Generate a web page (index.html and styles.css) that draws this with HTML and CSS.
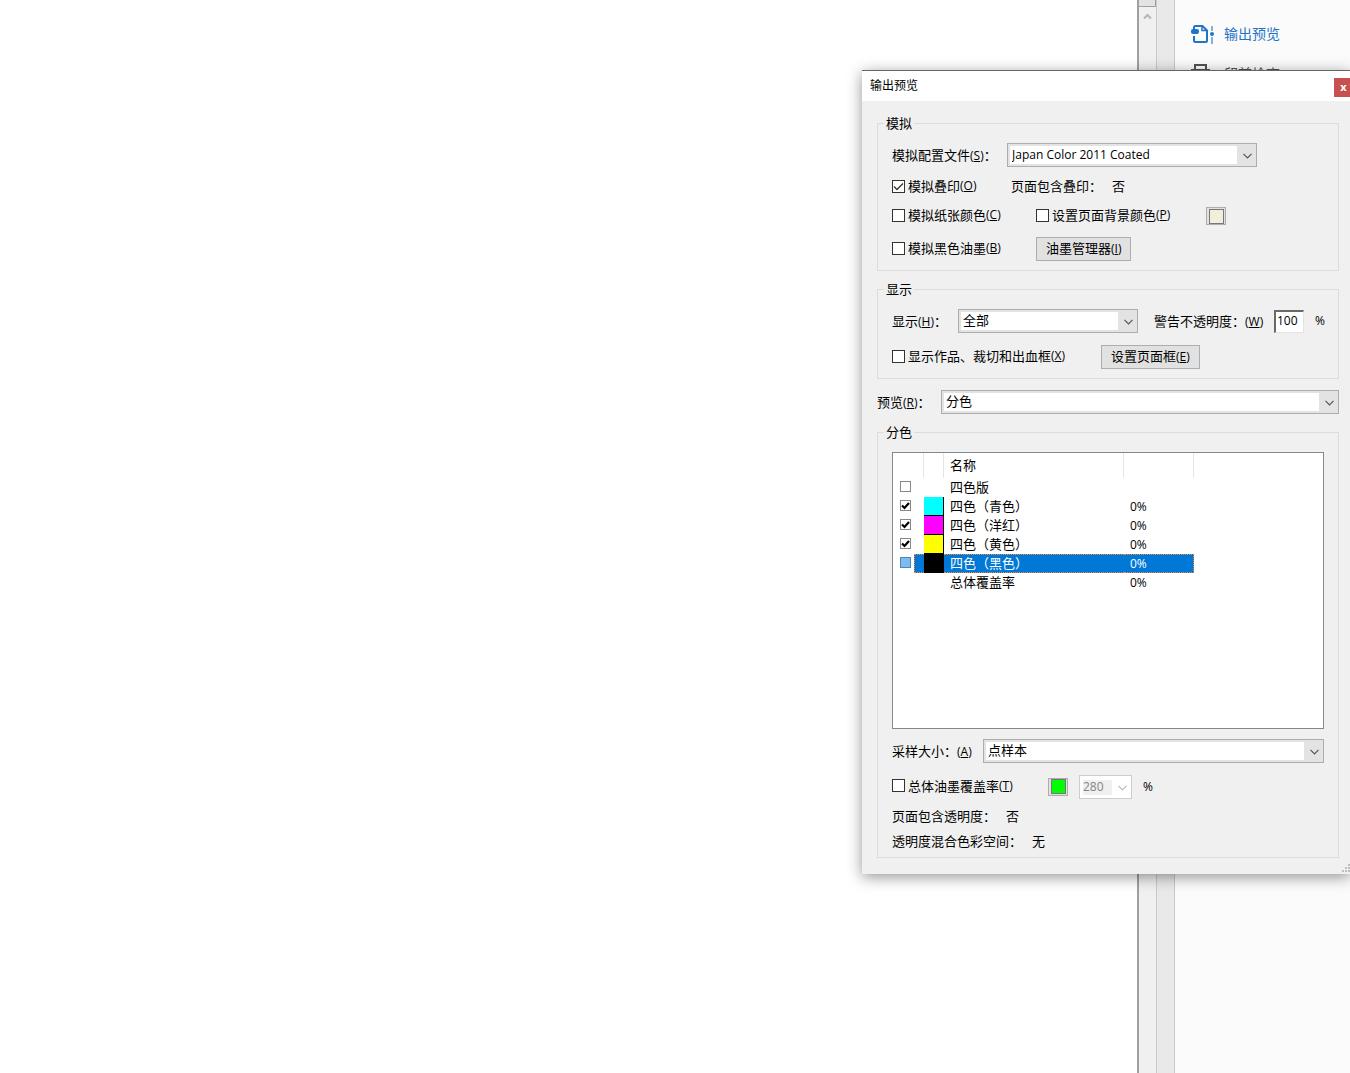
FILE: index.html
```html
<!DOCTYPE html>
<html lang="zh-CN">
<head>
<meta charset="utf-8">
<title>输出预览</title>
<link rel="stylesheet" href="styles.css">
</head>
<body>
<div class="workspace">
  <main class="document"></main>
  <div class="scrollbar">
    <div class="scroll-thumb"></div>
    <svg class="scroll-up" viewBox="0 0 9 6" width="9" height="6"><path d="M1 5.500 4.500 2 8 5.500" fill="none" stroke="#b8b8b8" stroke-width="2.200"/></svg>
  </div>
  <div class="splitter"></div>
  <nav class="tools">
    <a class="tool tool-active" href="#output">
      <svg viewBox="0 0 24 20" width="24" height="20">
        <path d="M3 5V3.500Q3 2 4.500 2H11.500L16 6.500V16.500Q16 18 14.500 18H4.500Q3 18 3 16.500V12" fill="none" stroke="currentColor" stroke-width="2"/>
        <path d="M11 2V6.500H16" fill="none" stroke="currentColor" stroke-width="1.500"/>
        <rect x="0" y="5" width="8" height="5" rx="2" fill="currentColor"/>
        <path d="M21 2V7M21 13V20" stroke="#7fb0e0" stroke-width="2"/>
        <circle cx="21" cy="10" r="2" fill="currentColor"/>
      </svg>
      <span>输出预览</span>
    </a>
    <a class="tool" href="#preflight">
      <svg viewBox="0 0 24 20" width="24" height="20">
        <path d="M4 6V1H15V6M1 15V6H18V15H15M4 11H15V19H4Z" fill="none" stroke="currentColor" stroke-width="2"/>
      </svg>
      <span>印前检查</span>
    </a>
  </nav>
</div>

<form class="dialog">
  <header class="titlebar">
    <h1>输出预览</h1>
    <button type="button" class="close" aria-label="关闭">x</button>
  </header>
  <div class="dialog-body">
    <fieldset>
      <legend>模拟</legend>
      <div class="group simulate">
        <div class="row">
          <label class="w-profile" for="profile">模拟配置文件<span class="key">(<u>S</u>)</span>：</label>
          <select id="profile" class="combo combo-profile"><option>Japan Color 2011 Coated</option></select>
        </div>
        <div class="row">
          <label class="check w-overprint"><input type="checkbox" checked>模拟叠印<span class="key">(<u>O</u>)</span></label>
          <span class="check">页面包含叠印：</span><span class="check answer">否</span>
        </div>
        <div class="row">
          <label class="check w-option"><input type="checkbox">模拟纸张颜色<span class="key">(<u>C</u>)</span></label>
          <label class="check w-backdrop"><input type="checkbox">设置页面背景颜色<span class="key">(<u>P</u>)</span></label>
          <button type="button" class="swatch paper" aria-label="页面背景颜色"></button>
        </div>
        <div class="row">
          <label class="check w-option"><input type="checkbox">模拟黑色油墨<span class="key">(<u>B</u>)</span></label>
          <button type="button" class="btn">油墨管理器<span class="key">(<u>I</u>)</span></button>
        </div>
      </div>
    </fieldset>

    <fieldset>
      <legend>显示</legend>
      <div class="group display">
        <div class="row">
          <label class="w-show" for="show">显示<span class="key">(<u>H</u>)</span>：</label>
          <select id="show" class="combo combo-show"><option>全部</option></select>
          <label class="w-opacity" for="opacity">警告不透明度：<span class="key">(<u>W</u>)</span></label>
          <input id="opacity" class="number" type="text" value="100">
          <span class="key percent">%</span>
        </div>
        <div class="row">
          <label class="check w-boxes"><input type="checkbox">显示作品、裁切和出血框<span class="key">(<u>X</u>)</span></label>
          <button type="button" class="btn">设置页面框<span class="key">(<u>E</u>)</span></button>
        </div>
      </div>
    </fieldset>

    <div class="row preview">
      <label class="w-preview" for="preview">预览<span class="key">(<u>R</u>)</span>：</label>
      <select id="preview" class="combo combo-fill"><option>分色</option></select>
    </div>

    <fieldset>
      <legend>分色</legend>
      <div class="group plates">
        <div class="listbox">
          <table>
            <colgroup><col class="c-check"><col class="c-ink"><col class="c-name"><col class="c-value"></colgroup>
            <thead><tr><th></th><th></th><th>名称</th><th></th></tr></thead>
            <tbody>
              <tr><td><input type="checkbox" aria-label="四色版"></td><td></td><td>四色版</td><td></td></tr>
              <tr><td><input type="checkbox" aria-label="青色" checked></td><td class="ink cyan"></td><td>四色（青色）</td><td class="key">0%</td></tr>
              <tr><td><input type="checkbox" aria-label="洋红" checked></td><td class="ink magenta"></td><td>四色（洋红）</td><td class="key">0%</td></tr>
              <tr><td><input type="checkbox" aria-label="黄色" checked></td><td class="ink yellow"></td><td>四色（黄色）</td><td class="key">0%</td></tr>
              <tr class="selected"><td><input type="checkbox" aria-label="黑色"></td><td class="ink black"></td><td>四色（黑色）</td><td class="key">0%</td></tr>
              <tr><td></td><td></td><td>总体覆盖率</td><td class="key">0%</td></tr>
            </tbody>
          </table>
        </div>
        <div class="row">
          <label class="w-sample" for="sample">采样大小：<span class="key">(<u>A</u>)</span></label>
          <select id="sample" class="combo combo-fill"><option>点样本</option></select>
        </div>
        <div class="row">
          <label class="check w-coverage"><input type="checkbox">总体油墨覆盖率<span class="key">(<u>T</u>)</span></label>
          <button type="button" class="swatch green" aria-label="覆盖率颜色"></button>
          <select class="combo combo-limit" aria-label="覆盖率上限" disabled><option>280</option></select>
          <span class="key percent">%</span>
        </div>
        <div class="row"><span>页面包含透明度：</span><span class="answer">否</span></div>
        <div class="row"><span>透明度混合色彩空间：</span><span class="answer">无</span></div>
      </div>
    </fieldset>
  </div>
  <svg class="grip" viewBox="0 0 8 8" width="8" height="8"><path d="M6 0h2v2h-2zM3 3h2v2h-2zM6 3h2v2h-2zM0 6h2v2h-2zM3 6h2v2h-2zM6 6h2v2h-2z" fill="#bdbdbd"/></svg>
</form>
</body>
</html>
```

FILE: styles.css
```css
* { box-sizing: border-box; }

body {
  margin: 0;
  position: relative;
  min-height: 100vh;
  overflow: hidden;
  background: #fff;
  color: #000;
  font: 13px/20px "Open Sans", "Noto Sans CJK SC", sans-serif;
}

button, input, select { font: inherit; color: inherit; margin: 0; }

/* Application behind the dialog */
.workspace { display: flex; min-height: 100vh; }
.document { flex: 1; }

.scrollbar {
  width: 20px;
  border-left: 2px solid #a0a0a0;
  border-right: 1px solid #c9c9c9;
  background: #f0f0f0;
  display: flex;
  flex-direction: column;
  align-items: center;
  gap: 6px;
}
.scroll-thumb {
  align-self: stretch;
  height: 7px;
  background: #e3e3e3;
  border: 1px solid #a0a0a0;
  border-width: 0 1px 1px 0;
}

.splitter { width: 18px; background: #e9e9e9; border-right: 1px solid #c9c9c9; }

.tools {
  width: 175px;
  padding: 14px 16px;
  background: #fbfbfb;
}
.tool {
  display: flex;
  align-items: center;
  gap: 9px;
  height: 40px;
  font-size: 14px;
  color: #505050;
  text-decoration: none;
}
.tool-active { color: #1f73c9; }

/* Dialog window */
.dialog {
  position: absolute;
  top: 70px;
  right: 0;
  width: 488px;
  background: #f0f0f0;
  border-top: 1px solid #666;
  box-shadow: 0 3px 14px rgba(0, 0, 0, 0.42);
}
.titlebar {
  display: flex;
  align-items: center;
  justify-content: space-between;
  height: 30px;
  padding-left: 8px;
  background: #fff;
}
.titlebar h1 { margin: 0; font-size: 12px; font-weight: 400; }
.close {
  width: 16px;
  height: 19px;
  margin-top: 3px;
  padding: 0 0 2px 3px;
  border: 0;
  background: #c75050;
  color: #fff;
  font-size: 11px;
  font-weight: 700;
  line-height: 16px;
}
.dialog-body { padding: 12px 11px 16px 15px; }
.grip { position: absolute; right: 0; bottom: 2px; }

fieldset {
  margin: 0 0 8px;
  padding: 0 6px;
  border: 1px solid #dcdcdc;
  min-width: 0;
}
fieldset:last-child { margin-bottom: 0; }
legend { padding: 0 2px; height: 20px; }

.group { display: grid; padding: 0 8px; }
.simulate { grid-template-rows: 34px 30px 28px 38px; padding-top: 5px; padding-bottom: 2px; }
.display { grid-template-rows: 36px 36px; padding-top: 4px; padding-bottom: 3px; }
.plates { grid-template-rows: 281px 36px 35px 24px 25px; padding-top: 10px; padding-bottom: 4px; }

.row { display: flex; align-items: center; white-space: nowrap; }
.preview { margin: 11px 0 8px; }
.key { font-size: 12px; }
.answer { margin-left: 10px; }

.w-profile { width: 115px; }
.w-overprint { width: 119px; }
.w-option { width: 144px; }
.w-backdrop { width: 170px; }
.w-show { width: 66px; }
.w-opacity { width: 120px; margin-left: 16px; }
.w-boxes { width: 209px; }
.w-preview { width: 64px; }
.w-sample { width: 91px; }
.w-coverage { width: 156px; }

/* Controls */
.check { display: flex; align-items: center; padding-bottom: 2px; }
input[type="checkbox"] {
  appearance: none;
  flex: none;
  width: 13px;
  height: 13px;
  margin-right: 3px;
  border: 1px solid #333;
  background: #fff center / 11px 11px no-repeat;
}
input[type="checkbox"]:checked {
  background-image: url("data:image/svg+xml,%3Csvg xmlns='http://www.w3.org/2000/svg' viewBox='0 0 11 11'%3E%3Cpath d='M1 5.500 4 8.500 10 2.500' fill='none' stroke='%23333' stroke-width='1.300'/%3E%3C/svg%3E");
}

.combo {
  appearance: none;
  height: 24px;
  padding: 0 20px 2px 4px;
  border: 1px solid #adadad;
  border-radius: 0;
  line-height: 20px;
  background:
    url("data:image/svg+xml,%3Csvg xmlns='http://www.w3.org/2000/svg' viewBox='0 0 9 6'%3E%3Cpath d='M0.500 0.800 4.500 4.800 8.500 0.800' fill='none' stroke='%23555' stroke-width='1.200'/%3E%3C/svg%3E") right 4px top 9px / 9px 6px no-repeat,
    linear-gradient(#fff, #fff) 2px 2px / calc(100% - 21px) 18px no-repeat,
    #e3e3e3;
}
.combo-profile { width: 250px; padding-bottom: 0; font-size: 12px; }
.combo-show { width: 180px; }
.combo-fill { flex: 1; }
.combo-limit {
  width: 53px;
  margin-left: 11px;
  padding-left: 3px;
  padding-bottom: 0;
  font-size: 12px;
  color: #838383;
  opacity: 1;
  border-color: #ccc;
  background:
    url("data:image/svg+xml,%3Csvg xmlns='http://www.w3.org/2000/svg' viewBox='0 0 9 6'%3E%3Cpath d='M0.500 0.800 4.500 4.800 8.500 0.800' fill='none' stroke='%23bbb' stroke-width='1.200'/%3E%3C/svg%3E") right 4px top 9px / 9px 6px no-repeat,
    linear-gradient(#f0f0f0, #f0f0f0) 3px 4px / 29px 15px no-repeat,
    #fff;
}

.btn {
  height: 24px;
  padding: 0 9px 2px;
  border: 1px solid #adadad;
  background: #e1e1e1;
}
.swatch {
  width: 20px;
  height: 18px;
  padding: 0;
  border: 1px solid #adadad;
  background: #e1e1e1;
  display: grid;
  place-items: center;
}
.swatch::before { content: ""; width: 13px; height: 13px; border: 1px solid #777; }
.paper::before { background: #f0f0da; }
.green::before { background: #0f0; }

.number {
  width: 30px;
  height: 23px;
  padding: 0 1px 2px;
  border: 2px solid;
  border-color: #696969 #e3e3e3 #e3e3e3 #696969;
  border-width: 2px 1px 1px 2px;
  background: #fff;
  font-size: 12px;
}
.percent { margin-left: 11px; }

/* Ink plate list */
.listbox { height: 277px; border: 1px solid #828790; background: #fff; }
table { width: 301px; table-layout: fixed; border-spacing: 0; }
.c-check { width: 31px; }
.c-ink { width: 20px; }
.c-name { width: 180px; }
.c-value { width: 70px; }
th, td { padding: 0 0 0 6px; text-align: left; font-weight: 400; white-space: nowrap; }
th { height: 25px; padding-bottom: 2px; border-right: 1px solid #e5e5e5; }
td { height: 19px; line-height: 17px; }
td:first-child { position: relative; padding-left: 7px; }
td input[type="checkbox"] { display: block; width: 11px; height: 11px; border-color: #888; margin: 0 0 2px; }
td input[type="checkbox"]:checked {
  background-image: url("data:image/svg+xml,%3Csvg xmlns='http://www.w3.org/2000/svg' viewBox='0 0 11 11'%3E%3Cpath d='M2 5.500 4.500 8 9 3' fill='none' stroke='%23000' stroke-width='2.200'/%3E%3C/svg%3E");
}
.ink { border: 1px solid #000; border-width: 0 1px 1px 0; }
.cyan { background: #0ff; }
.magenta { background: #f0f; }
.yellow { background: #ff0; }
.selected { color: #fff; }
.selected td:nth-child(n+3) {
  background: #0078d7;
  border: 1px dotted #ff8728;
  border-width: 1px 0;
}
.selected td:last-child { border-right-width: 1px; }
.selected td.black { background: #000; }
.selected td:first-child::after {
  content: "";
  position: absolute;
  inset: 0 0 0 21px;
  background: #0078d7;
  border: 1px dotted #ff8728;
  border-right: 0;
}
.selected input[type="checkbox"] { background-color: #80bbeb; border-color: #4588bd; }
```
